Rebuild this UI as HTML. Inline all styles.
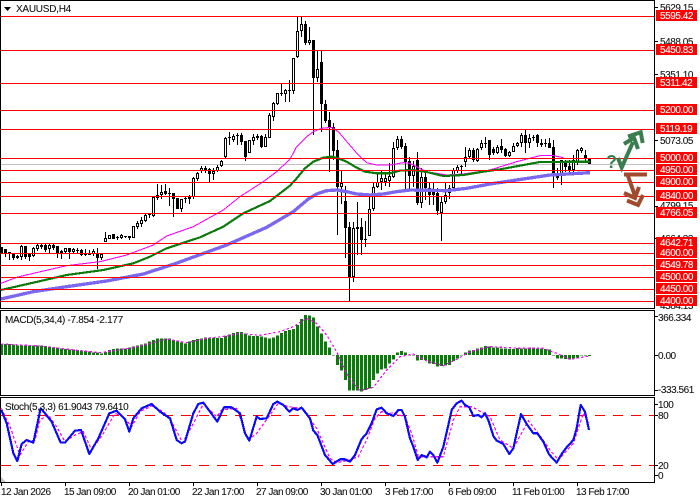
<!DOCTYPE html>
<html><head><meta charset="utf-8"><style>
html,body{margin:0;padding:0;background:#fff}
svg{display:block}
text{font-family:"Liberation Sans",sans-serif;font-size:10px;fill:#111;stroke:#111;stroke-width:.08px}
.a{letter-spacing:-.45px}
.w{fill:#fff;stroke:#fff;letter-spacing:-.45px}
.t{letter-spacing:-.5px}
.l{letter-spacing:-.32px}
</style></head><body>
<svg width="700" height="500" viewBox="0 0 700 500" xmlns="http://www.w3.org/2000/svg">
<rect width="700" height="500" fill="#fff"/>
<g shape-rendering="crispEdges">
<path d="M1 164.5H655" stroke="#c0c0c0" fill="none"/>
<path fill="none" stroke="#000" d="M1.5 247V253M5.5 249V257M9.5 252V260M13.5 254V260M17.5 255V259M21.5 245V260M25.5 246V259M29.5 254V261M33.5 247V257M37.5 243V251M41.5 243V249M45.5 244V252M49.5 244V253M53.5 244V250M57.5 246V258M61.5 250V259M65.5 248V253M69.5 248V259M73.5 248V253M77.5 248V253M81.5 249V256M85.5 249V256M89.5 250V255M93.5 249V256M97.5 248V269M101.5 254V260M105.5 232V242M109.5 235V239M113.5 234V239M117.5 236V240M121.5 234V239M125.5 236V238M129.5 236V240M133.5 226V238M137.5 221V229M141.5 217V227M145.5 213V222M149.5 213V218M153.5 196V217M157.5 184V200M161.5 185V199M165.5 184V195M169.5 188V206M173.5 193V217M177.5 198V209M181.5 199V212M185.5 197V203M189.5 195V204M193.5 177V199M197.5 172V181M201.5 166V173M205.5 166V173M209.5 168V182M213.5 168V180M217.5 165V172M221.5 160V167M225.5 137V158M229.5 132V145M233.5 134V142M237.5 133V145M241.5 133V145M245.5 141V161M249.5 140V153M253.5 134V145M257.5 134V140M261.5 135V148M265.5 134V147M269.5 113V138M273.5 102V121M277.5 93V105M281.5 84V96M285.5 89V102M289.5 80V102M293.5 58V94M297.5 17V58M301.5 17V37M305.5 21V45M309.5 27V45M313.5 40V135M317.5 50V82M321.5 51V132M325.5 100V123M329.5 112V172M333.5 123V160M337.5 140V235M341.5 171V204M345.5 186V258M349.5 222V301M353.5 222V282M357.5 202V255M361.5 218V255M365.5 221V247M369.5 195V236M373.5 182V211M377.5 173V188M381.5 170V190M385.5 172V186M389.5 163V187M393.5 142V178M397.5 136V150M401.5 136V149M405.5 143V190M409.5 157V190M413.5 161V187M417.5 152V205M421.5 168V208M425.5 170V200M429.5 182V205M433.5 183V205M437.5 188V215M441.5 197V241M445.5 182V204M449.5 185V199M453.5 168V189M457.5 165V173M461.5 165V175M465.5 147V167M469.5 148V158M473.5 148V162M477.5 148V162M481.5 140V150M485.5 137V148M489.5 140V160M493.5 147V155M497.5 145V154M501.5 139V153M505.5 148V157M509.5 151V157M513.5 143V152M517.5 142V147M521.5 133V147M525.5 130V153M529.5 134V148M533.5 135V141M537.5 134V147M541.5 139V147M545.5 139V147M549.5 138V148M553.5 140V188M557.5 168V180M561.5 160V185M565.5 160V172M569.5 160V172M573.5 155V173M577.5 149V165M581.5 147V153M585.5 150V161M589.5 159V164"/>
<path fill="#000" d="M0 247h3v6h-3zM4 249h3v5h-3zM8 252h3v2h-3zM12 254h3v4h-3zM16 256h3v2h-3zM24 246h3v11h-3zM28 254h3v3h-3zM44 245h3v5h-3zM52 245h3v3h-3zM56 246h3v7h-3zM60 251h3v2h-3zM68 248h3v4h-3zM76 250h3v1h-3zM80 250h3v5h-3zM84 254h3v1h-3zM88 254h3v1h-3zM96 253h3v5h-3zM112 234h3v5h-3zM116 237h3v1h-3zM124 236h3v1h-3zM128 236h3v2h-3zM148 214h3v1h-3zM164 191h3v3h-3zM168 193h3v1h-3zM172 193h3v6h-3zM176 198h3v11h-3zM184 198h3v1h-3zM204 168h3v3h-3zM208 169h3v5h-3zM228 137h3v1h-3zM236 135h3v1h-3zM240 135h3v7h-3zM244 141h3v16h-3zM256 136h3v2h-3zM260 136h3v11h-3zM280 93h3v1h-3zM288 90h3v1h-3zM304 24h3v19h-3zM312 40h3v38h-3zM320 62h3v42h-3zM324 104h3v17h-3zM328 120h3v7h-3zM332 127h3v24h-3zM336 150h3v37h-3zM344 201h3v27h-3zM348 227h3v50h-3zM356 227h3v2h-3zM360 227h3v13h-3zM364 239h3v1h-3zM400 139h3v8h-3zM404 146h3v16h-3zM408 161h3v15h-3zM416 160h3v43h-3zM424 177h3v11h-3zM428 188h3v7h-3zM432 189h3v6h-3zM436 193h3v18h-3zM460 166h3v1h-3zM472 150h3v10h-3zM484 143h3v1h-3zM488 140h3v15h-3zM492 149h3v4h-3zM500 146h3v4h-3zM504 149h3v7h-3zM524 135h3v8h-3zM532 137h3v1h-3zM536 135h3v8h-3zM540 143h3v2h-3zM544 143h3v1h-3zM548 143h3v5h-3zM552 147h3v28h-3zM556 175h3v3h-3zM564 162h3v5h-3zM568 166h3v4h-3zM584 155h3v4h-3zM588 159h3v5h-3z"/>
<path fill="#fff" stroke="#000" d="M20.5 246.500h2v10h-2zM32.500 248.500h2v7h-2zM36.500 245.500h2v3h-2zM40.500 245.500h2v1h-2zM48.500 245.500h2v3h-2zM64.500 248.500h2v3h-2zM72.500 249.500h2v2h-2zM92.500 251.500h2v2h-2zM100.500 254.500h2v3h-2zM104.500 238.500h2v3h-2zM108.500 235.500h2v3h-2zM120.500 235.500h2v2h-2zM132.500 226.500h2v11h-2zM136.500 223.500h2v3h-2zM140.500 220.500h2v3h-2zM144.500 215.500h2v5h-2zM152.500 197.500h2v18h-2zM156.500 195.500h2v2h-2zM160.500 192.500h2v2h-2zM180.500 199.500h2v9h-2zM188.500 197.500h2v1h-2zM192.500 178.500h2v18h-2zM196.500 173.500h2v5h-2zM200.500 168.500h2v2h-2zM212.500 171.500h2v2h-2zM216.500 167.500h2v3h-2zM220.500 161.500h2v4h-2zM224.500 138.500h2v18h-2zM232.500 136.500h2v3h-2zM248.500 140.500h2v12h-2zM252.500 137.500h2v3h-2zM264.500 137.500h2v9h-2zM268.500 115.500h2v22h-2zM272.500 103.500h2v13h-2zM276.500 93.500h2v10h-2zM284.500 90.500h2v3h-2zM292.500 58.500h2v32h-2zM296.500 31.500h2v25h-2zM300.500 24.500h2v6h-2zM308.500 40.500h2v2h-2zM316.500 69.500h2v8h-2zM340.500 183.500h2v3h-2zM352.500 228.500h2v48h-2zM368.500 209.500h2v26h-2zM372.500 187.500h2v21h-2zM376.500 182.500h2v4h-2zM380.500 178.500h2v3h-2zM384.500 178.500h2v3h-2zM388.500 176.500h2v4h-2zM392.500 148.500h2v28h-2zM396.500 139.500h2v8h-2zM412.500 166.500h2v9h-2zM420.500 177.500h2v25h-2zM440.500 202.500h2v10h-2zM444.500 195.500h2v6h-2zM448.500 188.500h2v4h-2zM452.500 170.500h2v17h-2zM456.500 167.500h2v3h-2zM464.500 157.500h2v4h-2zM468.500 150.500h2v6h-2zM476.500 149.500h2v11h-2zM480.500 143.500h2v4h-2zM496.500 147.500h2v5h-2zM508.500 152.500h2v3h-2zM512.500 146.500h2v5h-2zM516.500 143.500h2v2h-2zM520.500 135.500h2v7h-2zM528.500 138.500h2v4h-2zM560.500 160.500h2v14h-2zM572.500 160.500h2v9h-2zM576.500 150.500h2v12h-2zM580.500 148.500h2v2h-2z"/>
</g>

<g transform="scale(.33333)" fill="none" stroke-linejoin="round" shape-rendering="crispEdges">
<polyline stroke="#ff00ff" stroke-width="3.2" points="3,850 50,832 100,820 200,797 300,785 380,765 460,735 500,708 580,680 670,630 720,590 790,545 830,515 870,478 890,440 920,410 940,395 965,385 995,382 1015,395 1045,430 1075,465 1100,488 1130,495 1170,495 1210,488 1230,490 1280,515 1340,525 1390,522 1470,510 1550,485 1620,467 1660,467 1690,473"/>
<polyline stroke="#7b68ee" stroke-width="10" points="3,897 100,875 200,860 320,843 430,822 520,793 680,735 800,682 880,635 925,597 950,582 980,572 1010,570 1040,575 1070,582 1110,585 1150,582 1190,575 1230,570 1340,572 1400,565 1470,552 1550,540 1650,525 1770,518"/>
<polyline stroke="#0a7a0a" stroke-width="6.5" points="3,870 100,848 200,825 310,810 400,790 450,770 500,745 600,712 670,680 730,640 810,603 870,557 890,535 915,505 940,485 970,473 995,470 1015,475 1040,485 1070,503 1095,515 1130,520 1170,520 1200,512 1235,510 1280,516 1330,528 1390,525 1450,515 1500,508 1560,497 1620,486 1770,485"/>
</g>

<g shape-rendering="crispEdges" fill="none" stroke="#f00">
<path d="M1 16.500H655M1 50.500H655M1 83.500H655M1 110.500H655M1 129.500H655M1 158.500H655M1 170.500H655M1 182.500H655M1 196.500H655M1 213.500H655M1 243.500H655M1 253.500H655M1 265.500H655M1 277.500H655M1 289.500H655M1 301.500H655"/>
</g>

<!-- MACD -->
<g transform="translate(0 300) scale(1 .33333)" shape-rendering="crispEdges" fill="none" stroke="#0a7a0a" stroke-width="3">
<path d="M1.500 165V132M5.500 165V132M9.500 165V132M13.500 165V134M17.500 165V136M21.500 165V136M25.500 165V137M29.500 165V137M33.500 165V136M37.500 165V136M41.500 165V136M45.500 165V138M49.500 165V140M53.500 165V142M57.500 165V143M61.500 165V145M65.500 165V147M69.500 165V148M73.500 165V148M77.500 165V150M81.500 165V152M85.500 165V153M89.500 165V155M93.500 165V157M97.500 165V158M101.500 165V160M105.500 165V156M109.500 165V150M113.500 165V147M117.500 165V146M121.500 165V146M125.500 165V145M129.500 165V143M133.500 165V140M137.500 165V136M141.500 165V134M145.500 165V130M149.500 165V125M153.500 165V120M157.500 165V116M161.500 165V115M165.500 165V115M169.500 165V115M173.500 165V120M177.500 165V124M181.500 165V128M185.500 165V130M189.500 165V124M193.500 165V120M197.500 165V117M201.500 165V115M205.500 165V113M209.500 165V114M213.500 165V114M217.500 165V114M221.500 165V114M225.500 165V108M229.500 165V104M233.500 165V99M237.500 165V96M241.500 165V96M245.500 165V100M249.500 165V106M253.500 165V108M257.500 165V108M261.500 165V110M265.500 165V112M269.500 165V116M273.500 165V112M277.500 165V106M281.500 165V99M285.500 165V93M289.500 165V90M293.500 165V87M297.500 165V75M301.500 165V57M305.500 165V45M309.500 165V47M313.500 165V52M317.500 165V80M321.500 165V100M325.500 165V125M329.500 165V143M333.500 165V167M337.500 165V195M341.500 165V212M345.500 165V240M349.500 165V272M353.500 165V272M357.500 165V272M361.500 165V275M365.500 165V270M369.500 165V265M373.500 165V240M377.500 165V220M381.500 165V208M385.500 165V205M389.500 165V190M393.500 165V178M397.500 165V158M401.500 165V153M405.500 165V157M409.500 165V167M413.500 165V167M417.500 165V182M421.500 165V180M425.500 165V180M429.500 165V190M433.500 165V192M437.500 165V200M441.500 165V198M445.500 165V197M449.500 165V195M453.500 165V183M457.500 165V175M461.500 165V167M465.500 165V157M469.500 165V152M473.500 165V150M477.500 165V146M481.500 165V142M485.500 165V138M489.500 165V140M493.500 165V142M497.500 165V143M501.500 165V145M505.500 165V145M509.500 165V147M513.500 165V147M517.500 165V144M521.500 165V145M525.500 165V145M529.500 165V142M533.500 165V142M537.500 165V145M541.500 165V145M545.500 165V147M549.500 165V148M553.500 165V167M557.500 165V176M561.500 165V176M565.500 165V177M569.500 165V179M573.500 165V175M577.500 165V172M581.500 165V167M585.500 165V167M589.500 165V168"/>
</g>
<g transform="translate(0 300) scale(.33333)" fill="none" stroke="#ff00ff" stroke-width="3.6" stroke-dasharray="7 7" shape-rendering="crispEdges">
<polyline points="4,132 60,135 120,138 180,145 240,152 300,158 340,152 400,143 460,128 500,117 560,128 620,115 680,108 720,100 780,106 840,95 880,80 920,55 950,70 980,105 1010,155 1040,220 1050,237 1080,272 1120,262 1160,210 1200,170 1240,162 1280,183 1330,197 1370,178 1410,155 1470,140 1560,145 1630,145 1670,160 1710,178 1770,168"/>
</g>

<!-- Stoch -->
<g shape-rendering="crispEdges" fill="none" stroke="#f00">
<path d="M1 415.500H655M1 465.500H655" stroke-dasharray="10 8"/>
</g>
<g transform="translate(0 300) scale(.33333)" fill="none" stroke-linejoin="round" shape-rendering="crispEdges">
<polyline stroke="#ff00ff" stroke-width="3.6" stroke-dasharray="9 6" points="4,325 30,380 60,465 85,425 105,420 120,360 145,345 170,380 195,425 225,405 250,395 275,450 310,400 345,340 370,350 395,380 420,335 455,318 490,335 520,375 548,428 575,380 610,312 650,350 665,330 710,325 745,420 770,400 810,345 835,310 865,320 905,325 950,385 990,475 1010,488 1050,480 1075,470 1100,420 1125,355 1145,335 1180,340 1215,350 1235,400 1255,470 1290,470 1330,470 1360,360 1380,320 1415,320 1470,350 1500,420 1540,445 1585,362 1615,400 1650,450 1675,480 1720,430 1750,340 1767,370"/>
<polyline stroke="#0a0aff" stroke-width="6.5" points="4,330 20,370 40,460 52,483 65,432 80,420 100,428 122,325 135,340 155,365 182,428 195,428 225,392 243,390 268,462 295,415 328,340 350,332 375,358 388,395 400,355 425,325 455,312 480,335 510,355 530,420 545,430 555,425 580,340 595,312 610,308 630,335 652,365 672,322 695,322 720,340 735,400 748,422 770,350 780,357 800,355 820,312 832,305 850,315 868,335 880,325 892,330 905,323 930,355 940,392 952,405 975,465 998,492 1020,478 1035,478 1050,485 1065,465 1085,417 1100,400 1115,370 1130,328 1145,323 1160,340 1180,348 1195,330 1205,330 1215,350 1230,415 1240,440 1253,480 1265,465 1280,472 1290,455 1300,465 1312,488 1330,440 1345,375 1355,330 1370,310 1385,302 1395,315 1408,322 1420,348 1435,345 1445,352 1455,340 1465,360 1480,408 1490,422 1510,432 1528,462 1540,445 1563,342 1580,372 1600,400 1612,400 1630,425 1647,463 1670,488 1685,462 1700,442 1720,420 1730,385 1742,315 1755,335 1767,390"/>
</g>
<path d="M1 477L6 482H1z" fill="#c4c4c4"/>

<!-- borders -->
<g shape-rendering="crispEdges" fill="none" stroke="#000">
<path d="M0 .5H655M654.500 0V308M.5 0V308M0 308.500H655"/>
<path d="M0 310.500H655M654.500 310V395M.5 310V395M0 395.500H655"/>
<path d="M0 397.500H655M654.500 397V482M.5 397V482M0 482.500H655"/>
<path d="M655 7.500h3M655 41.500h3M655 74.500h3M655 140.500h3M655 206.500h3M655 238.500h3M655 316.500h3M655 355.500h3M655 390.500h3M655 404.500h3M655 415.500h3M655 465.500h3M655 475.500h3"/>
<path d="M1.500 483v3M65.500 483v3M129.500 483v3M193.500 483v3M257.500 483v3M321.500 483v3M385.500 483v3M449.500 483v3M513.500 483v3M577.500 483v3"/>
</g>

<!-- right axis -->
<text class="a" x="660" y="11">5629.15</text>
<text class="a" x="660" y="45">5488.05</text>
<text class="a" x="660" y="78">5351.10</text>
<text class="a" x="660" y="144">5073.05</text>
<text class="a" x="660" y="209">4799.15</text>
<text class="a" x="660" y="242">4664.33</text>
<text class="a" x="660" y="309">4384.13</text>

<g shape-rendering="crispEdges" fill="#f00">
<rect x="656" y="10" width="41" height="11"/><rect x="656" y="44" width="41" height="11"/><rect x="656" y="77" width="41" height="11"/><rect x="656" y="104" width="41" height="11"/><rect x="656" y="123" width="41" height="11"/><rect x="656" y="152" width="41" height="11"/><rect x="656" y="164" width="41" height="11"/><rect x="656" y="176" width="41" height="11"/><rect x="656" y="190" width="41" height="11"/><rect x="656" y="207" width="41" height="11"/><rect x="656" y="237" width="41" height="11"/><rect x="656" y="247" width="41" height="11"/><rect x="656" y="259" width="41" height="11"/><rect x="656" y="271" width="41" height="11"/><rect x="656" y="283" width="41" height="11"/><rect x="656" y="295" width="41" height="11"/>
</g>
<text class="w" x="660" y="19">5595.42</text>
<text class="w" x="660" y="53">5450.83</text>
<text class="w" x="660" y="86">5311.42</text>
<text class="w" x="660" y="113">5200.00</text>
<text class="w" x="660" y="132">5119.19</text>
<text class="w" x="660" y="161">5000.00</text>
<text class="w" x="660" y="173">4950.00</text>
<text class="w" x="660" y="185">4900.00</text>
<text class="w" x="660" y="199">4840.00</text>
<text class="w" x="660" y="216">4766.05</text>
<text class="w" x="660" y="246">4642.71</text>
<text class="w" x="660" y="256">4600.00</text>
<text class="w" x="660" y="268">4549.78</text>
<text class="w" x="660" y="280">4500.00</text>
<text class="w" x="660" y="292">4450.00</text>
<text class="w" x="660" y="304">4400.00</text>

<text class="a" x="658" y="321">366.334</text>
<text class="a" x="658" y="359">0.00</text>
<text class="a" x="658" y="393">-333.561</text>
<text class="a" x="658" y="408">100</text>
<text class="a" x="658" y="419">80</text>
<text class="a" x="658" y="469">20</text>
<text class="a" x="658" y="479">0</text>

<!-- header -->
<path d="M4 7h7l-3.500 4z" fill="#000"/>
<text x="16" y="12" style="letter-spacing:-.25px">XAUUSD,H4</text>
<text class="l" x="5" y="323">MACD(5,34,4) -7.854 -2.177</text>
<text class="l" x="5" y="410">Stoch(5,3,3) 61.9043 79.6410</text>

<!-- time axis -->
<text class="t" x="1" y="495">12 Jan 2026</text>
<text class="t" x="64" y="495">15 Jan 09:00</text>
<text class="t" x="128" y="495">20 Jan 01:00</text>
<text class="t" x="192" y="495">22 Jan 17:00</text>
<text class="t" x="256" y="495">27 Jan 09:00</text>
<text class="t" x="320" y="495">30 Jan 01:00</text>
<text class="t" x="385" y="495">3 Feb 17:00</text>
<text class="t" x="448" y="495">6 Feb 09:00</text>
<text class="t" x="512" y="495">11 Feb 01:00</text>
<text class="t" x="576" y="495">13 Feb 17:00</text>

<!-- arrows -->
<g fill="none" stroke="#3a7d4f" stroke-width="4">
<path d="M618 158L621.700 167.500L633 142"/>
<path d="M624 144L634 137.700L638 149"/>
<path d="M628 136.500L640.700 132.300L642.700 143"/>
</g>
<g fill="none" stroke="#a04a2e" stroke-width="4">
<path d="M624 174.500H647"/>
<path d="M628 176L635 196"/>
<path d="M624 193L635 198L639 187"/>
<path d="M627 200.500L638 205L643 195"/>
</g>
<text x="606" y="168" style="font-size:18px;font-weight:bold;fill:#3a7d4f;stroke:none">?</text>
</svg>
</body></html>
